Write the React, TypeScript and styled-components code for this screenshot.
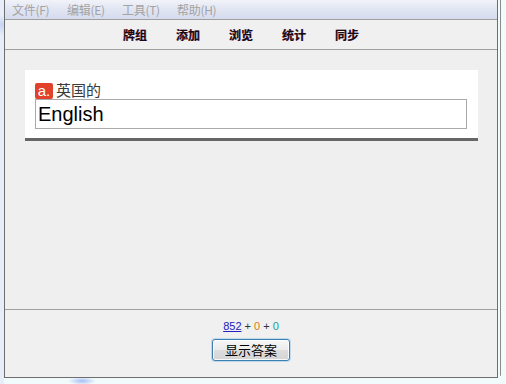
import React from 'react';
import styled, { createGlobalStyle } from 'styled-components';

const GlobalStyle = createGlobalStyle`
  html, body {
    margin: 0;
    padding: 0;
  }
  body {
    width: 506px;
    height: 384px;
    overflow: hidden;
    background: #f1fbfb;
    font-family: "Noto Sans CJK SC", "Liberation Sans", sans-serif;
  }
`;

const Desk = styled.div`
  display: flex;
  height: 384px;
  background:
    radial-gradient(ellipse 14px 4px at 82px 381px, #a9bdf5 0%, rgba(169, 189, 245, 0) 100%),
    linear-gradient(90deg, #e7eef9 0, #e7eef9 4px, #f1fbfb 4px);
`;

const LeftGap = styled.div`
  width: 4px;
  flex: none;
  background: linear-gradient(180deg, rgba(0,0,0,0) 16px, #c6d4f3 24px, rgba(0,0,0,0) 36px);
`;

const Window = styled.div`
  width: 492px;
  height: 377px;
  flex: none;
  display: flex;
  flex-direction: column;
  border: 1px solid #6e6e6e;
  border-top: none;
  background: #f0f0f0;
`;

const RightEdge = styled.div`
  width: 1px;
  height: 376px;
  margin-left: 2px;
  flex: none;
  background: #8a8a8a;
  border-bottom-right-radius: 3px;
`;

const MenuBar = styled.div`
  height: 19px;
  display: flex;
  align-items: center;
  padding-left: 7px;
  background: linear-gradient(180deg, #f1f3f9 0%, #e2e6f3 45%, #d5dbee 100%);
  border-bottom: 1px solid #a0a0a0;
`;

const MenuItem = styled.span`
  width: 55px;
  font-size: 12px;
  letter-spacing: -0.3px;
  color: #a3a3a3;
  line-height: 19px;
  white-space: nowrap;
`;

const Toolbar = styled.div`
  height: 29px;
  display: flex;
  align-items: center;
  gap: 29px;
  padding-left: 118px;
  border-bottom: 1px solid #a0a0a0;
  background: #f0f0f0;
`;

const ToolItem = styled.span`
  font-size: 12px;
  font-weight: bold;
  color: #1a0a10;
  line-height: 14px;
  text-shadow: -0.4px 0 rgba(200, 0, 0, 0.35), 0.4px 0 rgba(0, 0, 200, 0.35);
`;

const Main = styled.div`
  flex: 1;
  padding: 20px 19px 0 20px;
  border-bottom: 1px solid #a0a0a0;
  background: #efefef;
`;

const Card = styled.div`
  background: #ffffff;
  padding: 12px 10px 9px 10px;
  border-bottom: 3px solid #666666;
`;

const Prompt = styled.div`
  display: flex;
  align-items: center;
  gap: 3px;
  height: 17px;
`;

const Badge = styled.span`
  width: 18px;
  height: 16px;
  border-radius: 2px;
  background: #e2412b;
  color: #ffffff;
  font-family: "Liberation Sans", sans-serif;
  font-size: 15px;
  line-height: 15px;
  text-align: center;
  display: inline-block;
`;

const PromptText = styled.span`
  font-size: 15px;
  color: #3a3a3a;
  line-height: 15px;
  margin-top: -2px;
`;

const Answer = styled.input`
  display: block;
  box-sizing: border-box;
  width: 432px;
  height: 30px;
  margin: 0;
  padding: 0 0 0 2px;
  border: 1px solid #a9a9a9;
  outline: none;
  background: #ffffff;
  font-family: "Liberation Sans", Arial, sans-serif;
  font-size: 20px;
  color: #000000;
`;

const Footer = styled.div`
  height: 67px;
  display: flex;
  flex-direction: column;
  align-items: center;
  padding-top: 9px;
  box-sizing: border-box;
  background: #f0f0f0;
`;

const Counts = styled.div`
  font-family: "Liberation Sans", Arial, sans-serif;
  font-size: 11px;
  line-height: 14px;
  color: #333333;
`;

const Count = styled.span<{ $color: string }>`
  color: ${p => p.$color};
`;

const CountLink = styled.a`
  color: #2020c0;
  text-decoration: underline;
`;

const AnswerButton = styled.button`
  margin-top: 6px;
  width: 78px;
  height: 22px;
  padding: 0;
  border: 1px solid #3c7fb1;
  border-radius: 3px;
  background: linear-gradient(180deg, #f6f6f6 0%, #ececec 48%, #dddddd 52%, #d4d4d4 100%);
  box-shadow: inset 0 0 0 1px rgba(255, 255, 255, 0.8), 0 0 0 1px rgba(120, 180, 230, 0.4);
  font-family: "Noto Sans CJK SC", sans-serif;
  font-size: 13px;
  line-height: 18px;
  color: #000000;
`;

export default function App() {
  const menus = ['文件(F)', '编辑(E)', '工具(T)', '帮助(H)'];
  const tools = ['牌组', '添加', '浏览', '统计', '同步'];

  return (
    <>
      <GlobalStyle />
      <Desk>
        <LeftGap />
        <Window>
          <MenuBar>
            {menus.map(m => (
              <MenuItem key={m}>{m}</MenuItem>
            ))}
          </MenuBar>
          <Toolbar>
            {tools.map(t => (
              <ToolItem key={t}>{t}</ToolItem>
            ))}
          </Toolbar>
          <Main>
            <Card>
              <Prompt>
                <Badge>a.</Badge>
                <PromptText>英国的</PromptText>
              </Prompt>
              <Answer defaultValue="English" />
            </Card>
          </Main>
          <Footer>
            <Counts>
              <CountLink href="#">852</CountLink> + <Count $color="#e07a10">0</Count> +{' '}
              <Count $color="#10a0a0">0</Count>
            </Counts>
            <AnswerButton>显示答案</AnswerButton>
          </Footer>
        </Window>
        <RightEdge />
      </Desk>
    </>
  );
}
